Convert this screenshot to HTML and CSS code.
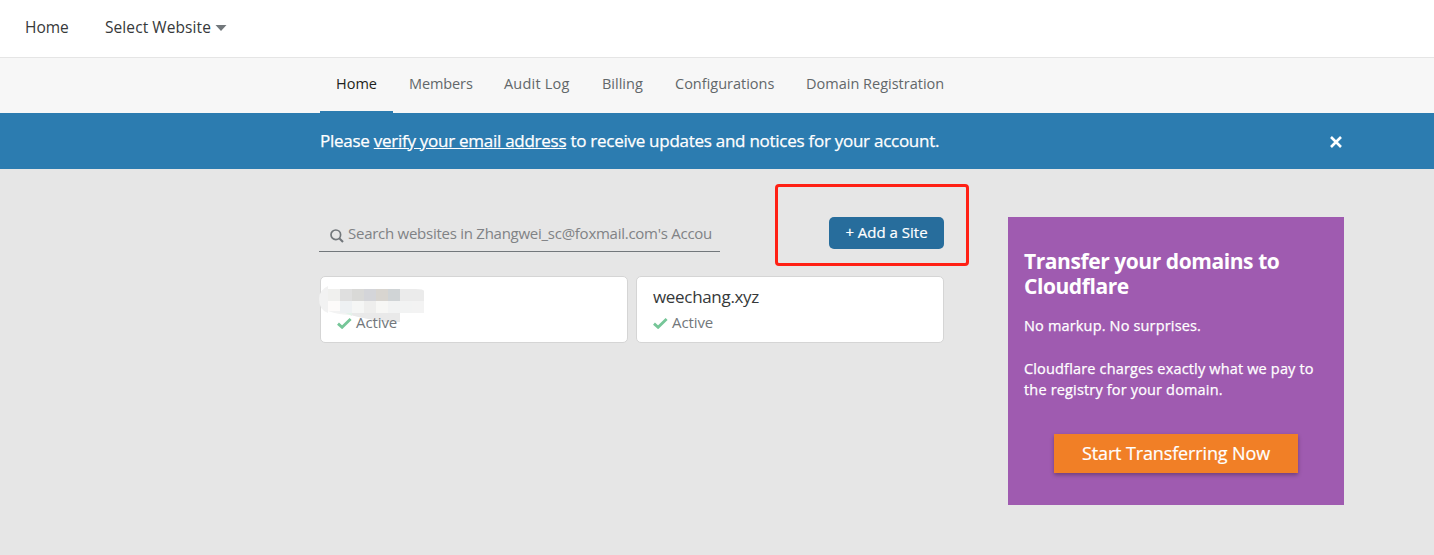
FILE: index.html
```html
<!DOCTYPE html>
<html lang="en">
<head>
<meta charset="utf-8">
<title>Home | Cloudflare</title>
<link rel="stylesheet" href="styles.css">
</head>
<body>
<header class="topbar">
  <a class="top-link top-home">Home</a>
  <a class="top-link top-select">Select Website</a>
  <svg class="caret" width="12" height="6" viewBox="0 0 12 6"><path d="M0.5 0h11L6 6z" fill="#72777b"/></svg>
</header>
<nav class="tabs">
  <a class="tab active t-home">Home</a>
  <a class="tab t-members">Members</a>
  <a class="tab t-audit">Audit Log</a>
  <a class="tab t-billing">Billing</a>
  <a class="tab t-config">Configurations</a>
  <a class="tab t-domain">Domain Registration</a>
</nav>
<section class="notice">
  <p class="notice-text">Please <a class="notice-link">verify your email address</a> to receive updates and notices for your account.</p>
  <svg class="close" width="12" height="12" viewBox="0 0 12 12"><path d="M1 1l10 10M11 1l-10 10" stroke="#fff" stroke-width="2.600" fill="none"/></svg>
</section>
<main class="content">
  <div class="sites">
    <div class="tools">
      <div class="search">
        <svg class="search-icon" width="14" height="14" viewBox="0 0 14 14"><circle cx="5.800" cy="5.800" r="4.800" fill="none" stroke="#72777b" stroke-width="1.700"/><path d="M9.200 9.200l3.800 3.800" stroke="#72777b" stroke-width="2.100"/></svg>
        <span class="placeholder">Search websites in Zhangwei_sc@foxmail.com's Accou</span>
      </div>
      <button class="add"><span>+ Add a Site</span></button>
      <div class="highlight"></div>
    </div>
    <div class="cards">
      <article class="card">
        <h2 class="site-name"></h2>
        <svg class="mosaic" width="106" height="36" viewBox="0 0 106 36">
          <path d="M9 0v27Q0 24 0 13Q0 4 9 0z" fill="#f2f2f2"/>
          <path d="M9 3h87q9 0 9 2v10H9z" fill="#ebebeb"/>
          <path d="M9 15h96v12H81v9H69Q46 33 32 29Q20 29 9 25z" fill="#f3f3f3"/>
          <path d="M32 27h49v9H69Q46 33 32 29z" fill="#e9e9e9"/>
          <path d="M24 26h9v4z" fill="#e4f3ea"/>
          <g transform="translate(1 0)" shape-rendering="crispEdges">
            <path d="M8 3h12v12H8z" fill="#f0f0ee"/><path d="M20 3h12v12H20z" fill="#dfdfdf"/><path d="M32 3h12v12H32z" fill="#d9d9d7"/><path d="M44 3h12v12H44z" fill="#d4d5d9"/><path d="M56 3h12v12H56z" fill="#d8d5d0"/><path d="M68 3h12v12H68z" fill="#d0d4d6"/>
            <path d="M8 15h12v10H8z" fill="#fdfbfa"/><path d="M20 15h12v12H20z" fill="#eef1f3"/><path d="M32 15h12v12H32z" fill="#f5f6f5"/><path d="M44 15h12v12H44z" fill="#eeeeed"/><path d="M56 15h12v12H56z" fill="#f7f7f5"/><path d="M68 15h24v12H68z" fill="#f2f3f3"/>
          </g>
        </svg>
        <p class="status"><svg class="check" width="15" height="11" viewBox="0 0 15 11"><path d="M1 5.600l4.100 3.700L13.600 1" stroke="#76c698" stroke-width="2.800" fill="none"/></svg><span class="state">Active</span></p>
      </article>
      <article class="card">
        <h2 class="site-name">weechang.xyz</h2>
        <p class="status"><svg class="check" width="15" height="11" viewBox="0 0 15 11"><path d="M1 5.600l4.100 3.700L13.600 1" stroke="#76c698" stroke-width="2.800" fill="none"/></svg><span class="state">Active</span></p>
      </article>
    </div>
  </div>
  <aside class="promo">
    <h1 class="promo-title">Transfer your domains to<br>Cloudflare</h1>
    <p class="promo-text lead">No markup. No surprises.</p>
    <p class="promo-text body">Cloudflare charges exactly what we pay to<br>the registry for your domain.</p>
    <button class="start"><span>Start Transferring Now</span></button>
  </aside>
</main>
</body>
</html>
```
FILE: styles.css
```css
* { box-sizing: border-box; }
body { margin: 0; min-height: 555px; background: #e6e6e6; font-family: "Open Sans", "Noto Sans", sans-serif; font-size: 15px; white-space: nowrap; overflow: hidden; }
h1, h2, p { margin: 0; font-weight: 400; }
button { border: 0; font-family: inherit; padding: 0; }
svg { display: block; flex: none; }
.topbar { height: 58px; background: #fff; border-bottom: 1px solid #e5e5e5; display: flex; align-items: center; padding: 0 25px 3px; color: #36393a; font-size: 15.500px; }
.top-home { width: 80px; }
.top-select { width: 111px; letter-spacing: 0.080px; }
.caret { margin: 1px 0 0 -1px; }
.tabs { height: 55px; background: #f7f7f7; padding-left: 320px; display: flex; color: #62676a; font-size: 14.500px; }
.tab { padding: 0 16px; line-height: 52px; }
.tab.active { color: #1d1f20; border-bottom: 2px solid #2c7cb0; }
.t-home { width: 73px; }
.t-members { width: 95px; letter-spacing: -0.1px; }
.t-audit { width: 98px; letter-spacing: 0.2px; }
.t-billing { width: 73px; }
.t-config { width: 131px; }
.notice { height: 56px; background: #2c7cb0; color: #fff; padding: 0 92px 0 320px; display: flex; align-items: center; justify-content: space-between; font-size: 17px; }
.notice-text { padding-bottom: 2px; letter-spacing: -0.265px; -webkit-text-stroke: 0.250px #fff; }
.notice-link { text-decoration: underline; }
.close { margin-top: 1px; }
.content { margin-left: 320px; width: 1024px; padding-top: 48px; display: grid; grid-template-columns: 624px 336px; column-gap: 64px; align-items: start; }
.tools { position: relative; display: flex; justify-content: space-between; height: 59px; align-items: flex-start; }
.search { width: 401px; height: 35px; margin-left: -1px; border-bottom: 1px solid #72777b; display: flex; align-items: center; padding-left: 11px; color: #808285; }
.search-icon { margin: 3px 4px 0 0; }
.placeholder { letter-spacing: -0.260px; padding-bottom: 2px; }
.add { width: 115px; height: 32px; background: #276d9c; color: #fff; border-radius: 5px; font-size: 15px; padding: 0 0 2px; -webkit-text-stroke: 0.200px #fff; }
.highlight { position: absolute; left: 455px; top: -33px; width: 194px; height: 82px; border: 3px solid #ff2014; border-radius: 4px; }
.cards { display: flex; gap: 8px; }
.card { position: relative; width: 308px; height: 67px; background: #fff; border: 1px solid #d5d5d5; border-radius: 5px; padding: 7px 16px; }
.site-name { height: 26px; line-height: 25px; font-size: 17px; letter-spacing: -0.320px; color: #36393a; }
.mosaic { position: absolute; left: -2px; top: 9px; }
.status { position: relative; display: flex; align-items: center; gap: 4px; height: 26px; color: #72777b; font-size: 15px; }
.state { padding-bottom: 2px; letter-spacing: -0.1px; }
.promo { height: 288px; background: #9f5bb0; color: #fff; padding: 32px 16px; }
.promo-title { font-size: 21px; line-height: 25px; font-weight: 700; letter-spacing: -0.430px; }
.promo-text { font-size: 14.500px; line-height: 21px; letter-spacing: 0.165px; -webkit-text-stroke: 0.250px #fff; }
.lead { margin-top: 16px; }
.body { margin-top: 22px; }
.start { display: block; width: 244px; height: 39px; margin: 34px auto 0; background: #f17f26; color: #fff; font-size: 18px; letter-spacing: -0.130px; padding: 0 0 1px; -webkit-text-stroke: 0.200px #fff; box-shadow: 0 2px 4px rgba(0,0,0,.3); }
```
